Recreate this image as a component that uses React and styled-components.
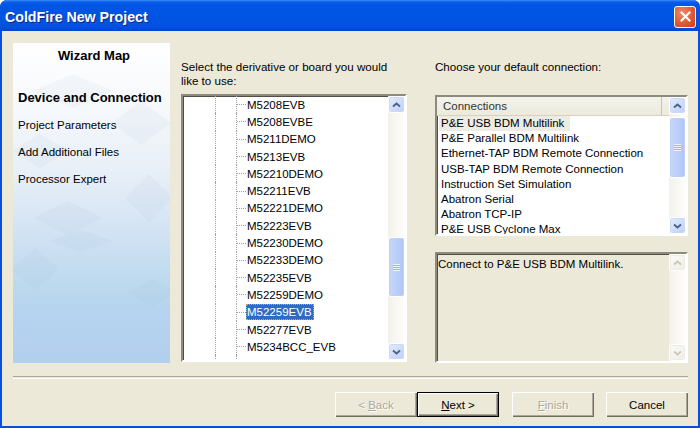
import React from 'react';
import styled, { createGlobalStyle } from 'styled-components';

const GlobalStyle = createGlobalStyle`
  html, body {
    margin: 0;
    padding: 0;
    background: #ffffff;
  }
  body {
    font-family: "Liberation Sans", Arial, sans-serif;
    font-size: 11.5px;
    color: #000;
  }
`

const boards = [
  'M5208EVB', 'M5208EVBE', 'M5211DEMO', 'M5213EVB', 'M52210DEMO', 'M52211EVB',
  'M52221DEMO', 'M52223EVB', 'M52230DEMO', 'M52233DEMO', 'M52235EVB',
  'M52259DEMO', 'M52259EVB', 'M52277EVB', 'M5234BCC_EVB', 'M5235EVB'
]

const connections = [
  'P&E USB BDM Multilink', 'P&E Parallel BDM Multilink',
  'Ethernet-TAP BDM Remote Connection', 'USB-TAP BDM Remote Connection',
  'Instruction Set Simulation', 'Abatron Serial', 'Abatron TCP-IP',
  'P&E USB Cyclone Max'
]

const wizardSteps = ['Project Parameters', 'Add Additional Files', 'Processor Expert']

// faint rhombi behind the wizard map
const diamonds = [
  [60, 48, 40, 17], [128, 80, 30, 22], [27, 108, 28, 17], [136, 155, 24, 24],
  [55, 175, 35, 17], [68, 198, 32, 11], [22, 226, 24, 21], [140, 250, 25, 14]
]

const Window = styled.div`
  width: 700px;
  height: 428px;
  display: flex;
  flex-direction: column;
  background: #0a4fdc;
  border-radius: 7px 7px 0 0;
  overflow: hidden;
`
const TitleBar = styled.div`
  height: 31px;
  flex: none;
  box-sizing: border-box;
  display: flex;
  align-items: center;
  justify-content: space-between;
  padding: 2px 4px 0 5px;
  background: linear-gradient(to bottom, #3b8cf5 0px, #0b5ee9 2px, #0055e5 5px, #0054e3 50%, #0052e0 85%, #0046cc 100%);
`
const Title = styled.span`
  color: #fff;
  font-weight: bold;
  font-size: 14.2px;
  text-shadow: 1px 1px 0 #0a2a8a;
`
const CloseButton = styled.div`
  width: 22px;
  height: 22px;
  box-sizing: border-box;
  border: 1px solid #fff;
  border-radius: 3px;
  background: radial-gradient(circle at 35% 30%, #ee8a6c 0%, #df5a34 55%, #c4411d 100%);
  display: flex;
  align-items: center;
  justify-content: center;
`
const Body = styled.div`
  flex: 1;
  margin: 0 2px 2px 2px;
  background: #ece9d8;
  display: flex;
  flex-direction: column;
`
const Main = styled.div`
  display: flex;
  padding: 12px 10px 0 11px;
  height: 320px;
`
const MapPanel = styled.div`
  position: relative;
  width: 157px;
  height: 320px;
  flex: none;
  overflow: hidden;
  background: linear-gradient(180deg, #ffffff 0%, #f7f9fc 18%, #e6eef7 42%, #d1e2f4 60%, #bedaee 74%, #b6d3ef 84%, #b3cfee 100%);
`
const MapArt = styled.svg`
  position: absolute;
  left: 0;
  top: 0;
`
const MapContent = styled.div`
  position: relative;
  padding: 5px 0 0 5px;
`
const MapTitle = styled.div`
  font-weight: bold;
  font-size: 13px;
  text-align: center;
  height: 16px;
  line-height: 16px;
  margin-bottom: 26px;
`
const MapStep = styled.div`
  font-size: ${p => (p.$current ? '13px' : '11.5px')};
  font-weight: ${p => (p.$current ? 'bold' : 'normal')};
  height: 27px;
  line-height: 16px;
`
const Column = styled.div`
  display: flex;
  flex-direction: column;
  width: ${p => p.$w}px;
  margin-left: ${p => p.$gap}px;
  flex: none;
`
const Label = styled.div`
  margin-top: 17px;
  line-height: 14px;
  font-size: 11.6px;
  height: ${p => p.$lines * 14}px;
  margin-bottom: ${p => p.$after}px;
`
const Sunken = styled.div`
  display: flex;
  height: ${p => p.$h}px;
  margin-bottom: ${p => p.$after || 0}px;
  box-sizing: border-box;
  border: 2px solid;
  border-color: #8e8b7e #ffffff #ffffff #8e8b7e;
  box-shadow: inset 1px 1px 0 #4f4d45;
  background: ${p => (p.$readonly ? '#ece9d8' : '#ffffff')};
  overflow: hidden;
`
const TreeBody = styled.div`
  flex: 1;
  overflow: hidden;
`
const TreeRow = styled.div`
  display: flex;
  align-items: center;
  height: 17.3px;
`
const Guide = styled.div`
  width: ${p => p.$w}px;
  height: 100%;
  flex: none;
  border-right: 1px dotted #a0a0a0;
`
const Stub = styled.div`
  width: 9px;
  height: 0;
  flex: none;
  border-top: 1px dotted #a0a0a0;
`
const TreeLabel = styled.span`
  padding: 1px 2px 1px 1px;
  line-height: 14px;
  white-space: nowrap;
  background: ${p => (p.$selected ? '#316ac5' : 'transparent')};
  color: ${p => (p.$selected ? '#fff' : '#000')};
  outline: ${p => (p.$selected ? '1px dotted #d8a84a' : 'none')};
  outline-offset: -1px;
`
const Scrollbar = styled.div`
  width: 17px;
  flex: none;
  display: flex;
  flex-direction: column;
  background: linear-gradient(to right, #f3f1ea, #fdfdfb);
`
const ScrollButton = styled.div`
  height: 17px;
  flex: none;
  box-sizing: border-box;
  border: 1px solid #fff;
  border-radius: 3px;
  display: flex;
  align-items: center;
  justify-content: center;
  background: ${p => (p.$disabled
    ? 'linear-gradient(135deg, #fbfbf8, #eeede5)'
    : 'linear-gradient(135deg, #e4ecfe, #bccff9)')};
  box-shadow: ${p => (p.$disabled ? 'inset 0 0 0 1px #ecebe4' : 'inset 0 0 0 1px #c9d8fb')};
`
const Track = styled.div`
  flex: 1;
  display: flex;
  flex-direction: column;
`
const Thumb = styled.div`
  margin-top: ${p => p.$top}px;
  height: ${p => p.$h}px;
  box-sizing: border-box;
  border: 1px solid #fff;
  border-radius: 3px;
  background: linear-gradient(to right, #c8d7fc, #b6cbf8 70%, #adc3f4);
  box-shadow: inset 0 0 0 1px #bcd0fa;
  display: flex;
  align-items: center;
  justify-content: center;
`
const Grip = styled.div`
  width: 7px;
  height: 7px;
  background: repeating-linear-gradient(to bottom, #eef3fe 0, #eef3fe 1px, #9db5ec 1px, #9db5ec 2px);
`
const ListBody = styled.div`
  flex: 1;
  display: flex;
  flex-direction: column;
  overflow: hidden;
`
const ListHeader = styled.div`
  height: 19px;
  flex: none;
  display: flex;
  align-items: center;
  box-sizing: border-box;
  background: linear-gradient(to bottom, #f4f3ec, #ebeadb);
  border-bottom: 1px solid #d6d2c2;
`
const HeaderCell = styled.div`
  width: 225px;
  height: 100%;
  box-sizing: border-box;
  padding-left: 6px;
  line-height: 18px;
  color: #333;
  border-right: 1px solid #c7c5b2;
`
const ListItem = styled.div`
  height: 15.2px;
  flex: none;
  line-height: 15px;
  padding-left: 2px;
  white-space: nowrap;
`
const ItemText = styled.span`
  padding: 0 6px 0 2px;
  display: inline-block;
  background: ${p => (p.$selected ? '#ecebe4' : 'transparent')};
`
const Description = styled.div`
  flex: 1;
  padding: 3px 0 0 1px;
  line-height: 14px;
`
const Separator = styled.div`
  margin: 13px 10px 0 11px;
  height: 1px;
  border-top: 1px solid #aca899;
  border-bottom: 1px solid #ffffff;
`
const ButtonRow = styled.div`
  display: flex;
  justify-content: flex-end;
  padding: 13px 10px 0 0;
`
const Button = styled.div`
  width: 82px;
  height: 25px;
  box-sizing: border-box;
  margin-left: ${p => p.$gap || 0}px;
  display: flex;
  align-items: center;
  justify-content: center;
  background: #ece9d8;
  border: ${p => (p.$default ? '1px solid #000' : '0')};
  box-shadow: inset 1px 1px 0 #ffffff, inset -1px -1px 0 #716f64, inset -2px -2px 0 #aca899;
  color: ${p => (p.$disabled ? '#aca899' : '#000')};
  text-shadow: ${p => (p.$disabled ? '1px 1px 0 #ffffff' : 'none')};
  font-size: 11.5px;
  white-space: pre;
`

const Chevron = ({ down, color }) => (
  <svg width="9" height="6" viewBox="0 0 9 6">
    <path
      d={down ? 'M1 1.5 L4.5 4.5 L8 1.5' : 'M1 4.5 L4.5 1.5 L8 4.5'}
      fill="none"
      stroke={color}
      strokeWidth="1.8"
    />
  </svg>
)

function ScrollBar({ top, height, disabled }) {
  const arrow = disabled ? '#c9c7ba' : '#4d6185'
  return (
    <Scrollbar>
      <ScrollButton $disabled={disabled}><Chevron color={arrow} /></ScrollButton>
      <Track>
        {!disabled && (
          <Thumb $top={top} $h={height}><Grip /></Thumb>
        )}
      </Track>
      <ScrollButton $disabled={disabled}><Chevron down color={arrow} /></ScrollButton>
    </Scrollbar>
  )
}

function App() {
  return (
    <Window>
      <GlobalStyle />
      <TitleBar>
        <Title>ColdFire New Project</Title>
        <CloseButton>
          <svg width="11" height="11" viewBox="0 0 11 11">
            <path d="M1.5 1.5 L9.5 9.5 M9.5 1.5 L1.5 9.5" stroke="#fff" strokeWidth="2.2" strokeLinecap="round" />
          </svg>
        </CloseButton>
      </TitleBar>

      <Body>
        <Main>
          <MapPanel>
            <MapArt width="157" height="320">
              {diamonds.map(([cx, cy, rx, ry], i) => (
                <polygon
                  key={i}
                  points={`${cx - rx},${cy} ${cx},${cy - ry} ${cx + rx},${cy} ${cx},${cy + ry}`}
                  fill="#9fb3c8"
                  opacity="0.08"
                />
              ))}
            </MapArt>
            <MapContent>
              <MapTitle>Wizard Map</MapTitle>
              <MapStep $current>Device and Connection</MapStep>
              {wizardSteps.map(s => <MapStep key={s}>{s}</MapStep>)}
            </MapContent>
          </MapPanel>

          <Column $w={226} $gap={11}>
            <Label $lines={2} $after={6}>
              Select the derivative or board you would<br />like to use:
            </Label>
            <Sunken $h={268}>
              <TreeBody>
                {boards.map(b => (
                  <TreeRow key={b}>
                    <Guide $w={32} />
                    <Guide $w={20} />
                    <Stub />
                    <TreeLabel $selected={b === 'M52259EVB'}>{b}</TreeLabel>
                  </TreeRow>
                ))}
              </TreeBody>
              <ScrollBar top={124} height={60} />
            </Sunken>
          </Column>

          <Column $w={253} $gap={28}>
            <Label $lines={1} $after={21}>Choose your default connection:</Label>
            <Sunken $h={141} $after={16}>
              <ListBody>
                <ListHeader><HeaderCell>Connections</HeaderCell></ListHeader>
                {connections.map((c, i) => (
                  <ListItem key={c}>
                    <ItemText $selected={i === 0}>{c}</ItemText>
                  </ListItem>
                ))}
              </ListBody>
              <ScrollBar top={3} height={61} />
            </Sunken>
            <Sunken $h={111} $readonly>
              <Description>Connect to P&amp;E USB BDM Multilink.</Description>
              <ScrollBar disabled />
            </Sunken>
          </Column>
        </Main>

        <Separator />

        <ButtonRow>
          <Button $disabled><span>&lt; <u>B</u>ack</span></Button>
          <Button $default><span><u>N</u>ext &gt;</span></Button>
          <Button $disabled $gap={13}><span><u>F</u>inish</span></Button>
          <Button $gap={12}>Cancel</Button>
        </ButtonRow>
      </Body>
    </Window>
  )
}

export default App
